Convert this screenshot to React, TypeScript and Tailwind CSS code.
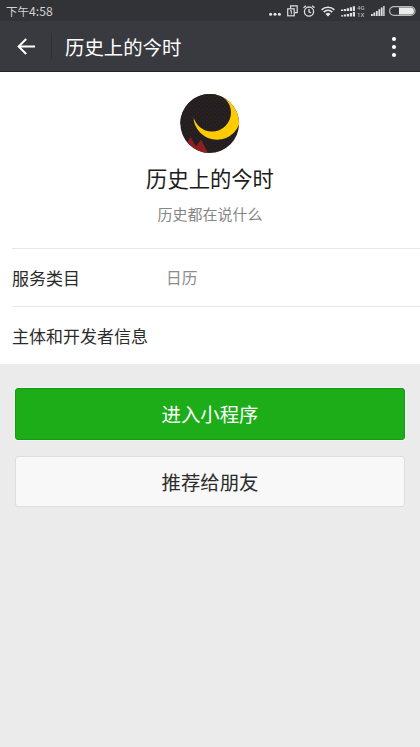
import type { ReactNode } from "react";

const APP_NAME = "历史上的今时";

function SignalBars({ className }: { className?: string }) {
  return (
    <svg width="14" height="10" viewBox="0 0 14 10" className={className} fill="#e0e0e0">
      <path d="M0 8h1.8v2H0zM2.4 6.5h1.8V10H2.4zM4.9 5h1.8v5H4.9zM7.4 3.2h1.8V10H7.4zM9.8 1.5h1.8V10H9.8zM12.2 0H13.6v10h-1.4z" />
    </svg>
  );
}

function DualSignal({ className }: { className?: string }) {
  return (
    <svg width="14" height="11" viewBox="0 0 14 11" className={className} fill="#e0e0e0">
      <path d="M0 3.5h2.2v1.4H0zM2.9 2.9h2.2v2H2.9zM5.8 2.2H8v2.7H5.8zM8.8 1.3H11v3.6H8.8zM11.8.2H14v4.7h-2.2z" />
      <path d="M0 9.2h2.2v1.4H0zM2.9 8.6h2.2v2H2.9zM5.8 7.9H8v2.7H5.8zM8.8 7H11v3.6H8.8zM11.8 5.9H14v4.7h-2.2z" />
    </svg>
  );
}

function StatusBar() {
  return (
    <div className="flex h-[21px] items-center justify-between bg-[#323336] pl-[6px] pr-[4px] text-[#d2d2d2]">
      <span className="pt-[2px] text-[11.5px] leading-none">
        下午<span className="text-[12.2px]">4:58</span>
      </span>
      <div className="flex items-center pt-px">
        <svg width="12" height="12" viewBox="0 0 12 12" fill="#e6e6e6">
          <circle cx="1.6" cy="9.2" r="1.5" />
          <circle cx="6" cy="9.2" r="1.5" />
          <circle cx="10.4" cy="9.2" r="1.5" />
        </svg>
        <svg width="11" height="12" viewBox="0 0 11 12" className="ml-[6px]" fill="none" stroke="#dcdcdc" strokeWidth="1.2">
          <path d="M3.6 3.8V.8h6.6v6.8H7.3" />
          <rect x=".7" y="3.8" width="6.5" height="7" />
          <path d="M3 6l1.3-.6v3.8" strokeWidth="1" />
        </svg>
        <svg width="12" height="12" viewBox="0 0 12 12" className="ml-[5px]" fill="none" stroke="#dcdcdc" strokeWidth="1.3">
          <circle cx="6" cy="6.6" r="4.6" />
          <path d="M6 4v2.8l1.9 1M.5 2.8L2.9.7M11.5 2.8L9.1.7" />
        </svg>
        <svg width="14" height="11" viewBox="0 0 14 11" className="ml-[6px]" fill="none" stroke="#e6e6e6" strokeWidth="1.5">
          <path d="M.6 3.9a9.2 9.2 0 0 1 12.8 0M2.7 6.1a6.2 6.2 0 0 1 8.6 0" />
          <path d="M4.5 7.9a3.7 3.7 0 0 1 5 0L7 10.6z" fill="#e6e6e6" stroke="none" />
        </svg>
        <DualSignal className="ml-[6px]" />
        <span className="-my-1 ml-[2px] flex w-[8px] flex-col font-['Roboto',sans-serif] text-[6px] font-medium leading-[7px] text-[#acadb0]">
          <span>4G</span>
          <span>1X</span>
        </span>
        <SignalBars className="ml-[6px]" />
        <svg width="27" height="10" viewBox="0 0 27 10" className="ml-[4px]">
          <rect x=".6" y=".6" width="25.4" height="8.8" rx="4.4" fill="none" stroke="#b9b9b9" strokeWidth="1.2" />
          <path d="M10 1.4h11.4a3.6 3.6 0 0 1 0 7.2H10z" fill="#ececec" />
        </svg>
      </div>
    </div>
  );
}

function NavBar() {
  return (
    <header className="flex h-[51px] items-center border-b border-[#242328] bg-[#393a3f]">
      <svg width="18" height="17" viewBox="0 0 18 17" className="ml-[17px]" fill="none" stroke="#fff" strokeWidth="2">
        <path d="M9.2 1L1.6 8.5l7.6 7.5M1.8 8.5H18" />
      </svg>
      <div className="ml-[16px] h-[26px] w-px bg-[#2f3035]" />
      <h1 className="ml-[13px] flex-1 pt-px text-[19.4px] leading-none text-white">{APP_NAME}</h1>
      <svg width="6" height="22" viewBox="0 0 6 22" className="mr-[23px] mt-[2px]" fill="#fff">
        <circle cx="3" cy="3" r="2.1" />
        <circle cx="3" cy="11" r="2.1" />
        <circle cx="3" cy="19" r="2.1" />
      </svg>
    </header>
  );
}

function AppLogo() {
  return (
    <svg width="60" height="60" viewBox="0 0 60 60">
      <defs>
        <clipPath id="logo">
          <circle cx="29.7" cy="29.5" r="29.4" />
        </clipPath>
        <pattern id="speckle" width="4" height="4" patternUnits="userSpaceOnUse">
          <rect width="4" height="4" fill="#231f20" />
          <path d="M0 0h1v1H0zM2 2h1v1H2z" fill="#501a1b" />
          <path d="M3 1h1v1H3zM1 3h1v1H1zM1 1h1v1H1z" fill="#152426" />
        </pattern>
      </defs>
      <g clipPath="url(#logo)">
        <rect width="60" height="60" fill="url(#speckle)" />
        {/* crescent: the lit disc minus the dark one, with a sharp left tip */}
        <circle cx="37" cy="22" r="23.7" fill="#ffcb05" />
        <circle cx="32" cy="18.6" r="19" fill="url(#speckle)" />
        <path d="M0 0h36L13.9 22.2L13 30L0 30z" fill="url(#speckle)" />
        <path d="M5 53L10.5 43L16 52.5L21 45.5L27.5 58v2H5z" fill="#8e1e20" />
      </g>
    </svg>
  );
}

function Row({ label, children }: { label: string; children?: ReactNode }) {
  return (
    <div className="ml-[12px] flex h-[58px] items-center border-t border-[#e6e6e6]">
      <span className="w-[154px] whitespace-nowrap text-[17px] text-[#2b2b2b]">{label}</span>
      <span className="text-[15.7px] text-[#8c8c8c]">{children}</span>
    </div>
  );
}

export default function App() {
  return (
    <div className="flex h-[747px] w-[420px] flex-col overflow-hidden bg-[#ebebeb] font-['Noto_Sans_CJK_SC',sans-serif]">
      <StatusBar />
      <NavBar />
      <main>
        <section className="bg-white">
          <div className="flex h-[176px] flex-col items-center pt-[22px]">
            <AppLogo />
            <h2 className="mt-[9px] text-[21.3px] leading-[30px] text-[#1d1b1d]">{APP_NAME}</h2>
            <p className="mt-[10px] text-[15px] leading-[22px] text-[#868686]">历史都在说什么</p>
          </div>
          <Row label="服务类目">日历</Row>
          <Row label="主体和开发者信息" />
        </section>
        <div className="flex flex-col gap-[16px] px-[15px] pt-[24px]">
          <button className="h-[52px] rounded-[3px] border border-[#119c14] bg-[#1cad19] text-[19.4px] text-white shadow-[0_0_0_1px_#f5f0f5]">
            进入小程序
          </button>
          <button className="h-[51px] rounded-[3px] border border-[#dedede] bg-[#f8f8f8] text-[19.4px] text-[#2b2b2b]">
            推荐给朋友
          </button>
        </div>
      </main>
    </div>
  );
}
